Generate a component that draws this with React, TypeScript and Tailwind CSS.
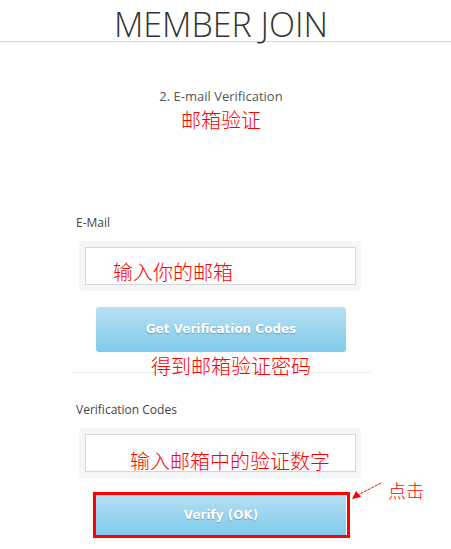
import React from "react";

const cjk = "font-['Noto_Sans_CJK_SC',sans-serif] font-light";

export default function App() {
  return (
    <div className="relative w-[451px] h-[549px] overflow-hidden bg-white font-['Open_Sans',sans-serif]">
      <header className="flex h-[42px] justify-center border-b border-[#d3d3d3] pr-[9px]">
        <h1 className="mt-[8px] text-[34px] leading-[32px] font-light text-[#333]">MEMBER JOIN</h1>
      </header>

      <div className="flex flex-col items-center pr-[9px]">
        <p className="mt-[45px] text-[13px] leading-[18px] text-[#555]">2. E-mail Verification</p>
        <p className={`mt-[5px] text-[20px] leading-[20px] text-[#ff0000] ${cjk}`}>邮箱验证</p>
      </div>

      <div className="relative ml-[71px] mt-[85px] w-[300px]">
        <label className="block pl-[5px] text-[12px] leading-[16px] text-[#444]">E-Mail</label>
        <div className="ml-[8px] mt-[10px] h-[50px] w-[282px] rounded-[4px] bg-[#f5f6f8] pl-[6px] pt-[6px]">
          <div className="relative h-[38px] w-[271px] border border-[#d6d6d6] bg-white">
            <span className={`absolute left-[27px] top-[14px] text-[20px] leading-[20px] text-[#ff0000] ${cjk}`}>输入你的邮箱</span>
          </div>
        </div>

        <div className="relative">
          <button className="ml-[25px] mt-[16px] flex h-[45px] w-[250px] items-center justify-center rounded-[3px] bg-gradient-to-b from-[#b6e0f3] to-[#7ecaeb] pb-[2px] font-['DejaVu_Sans',sans-serif] text-[12px] font-bold text-white [text-shadow:0_1px_1px_rgba(0,0,0,0.25)]">
            Get Verification Codes
          </button>
          <span className={`absolute left-[80px] top-[49px] text-[20px] leading-[20px] text-[#ff0000] ${cjk}`}>得到邮箱验证密码</span>
        </div>

        <div className="mt-[20px] h-px w-[300px] bg-[#ebebeb]" />

        <label className="mt-[29px] block pl-[5px] text-[12px] leading-[16px] text-[#444]">Verification Codes</label>
        <div className="ml-[8px] mt-[10px] h-[50px] w-[282px] rounded-[4px] bg-[#f5f6f8] pl-[6px] pt-[6px]">
          <div className="relative h-[38px] w-[271px] border border-[#d6d6d6] bg-white">
            <span className={`absolute left-[44px] top-[16px] text-[20px] leading-[20px] text-[#ff0000] ${cjk}`}>输入邮箱中的验证数字</span>
          </div>
        </div>

        <div className="ml-[22px] mt-[14px] h-[46px] w-[257px] border-[3px] border-[#ff0000] bg-white">
          <button className="flex h-[40px] w-[250px] items-center justify-center bg-gradient-to-b from-[#b6e0f3] to-[#7ecaeb] font-['DejaVu_Sans',sans-serif] text-[12px] font-bold text-white [text-shadow:0_1px_1px_rgba(0,0,0,0.25)]">
            Verify (OK)
          </button>
        </div>
      </div>

      <svg className="absolute left-[348px] top-[478px]" width="40" height="26" viewBox="0 0 40 26">
        <line x1="33" y1="5" x2="10" y2="17" stroke="#ff0000" strokeWidth="1" strokeDasharray="3 1" />
        <polygon points="4,21 8,13 13,19" fill="#ff0000" />
      </svg>
      <span className={`absolute left-[388px] top-[481px] text-[18px] leading-[18px] text-[#ff0000] ${cjk}`}>点击</span>
    </div>
  );
}
